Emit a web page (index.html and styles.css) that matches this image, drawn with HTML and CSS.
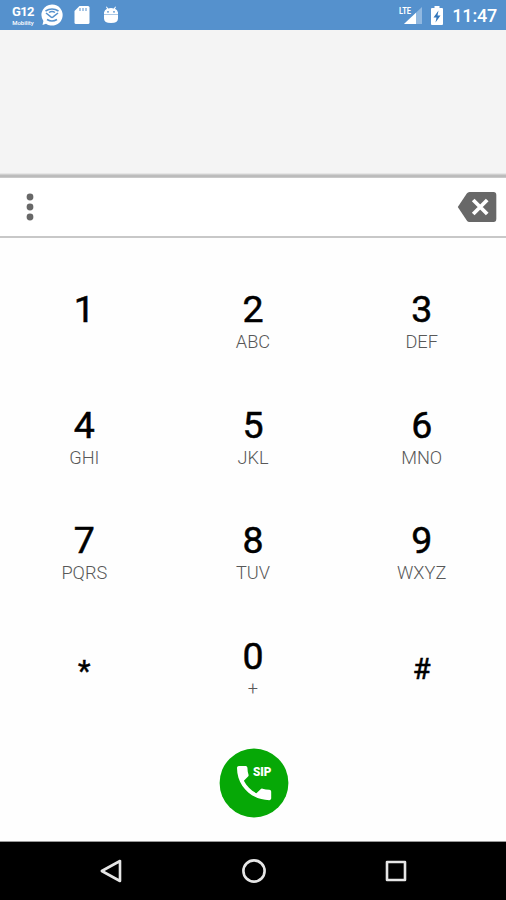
FILE: index.html
```html
<!DOCTYPE html>
<html lang="en">
<head>
<meta charset="utf-8">
<title>Dialer</title>
<link rel="stylesheet" href="styles.css">
</head>
<body>
<div class="phone">
  <header class="status">
    <div class="brand"><b>G12</b><span>Mobility</span></div>
    <svg class="mail" width="22" height="22" viewBox="0 0 22 22">
      <path d="M11 .4a10.600 10.600 0 1 1-6 19.300L1.500 21l.9-4A10.600 10.600 0 0 1 11 .4z" fill="#fff"/>
      <path d="M4.500 7Q11 2.800 17.500 7M5 9l5.200 4.200q.8.6 1.600 0L17 9M8 8.500q3-2 6 0" fill="none" stroke="#5591cd" stroke-width="1.500"/>
      <path d="M6 15.500q5 3 10 0" fill="none" stroke="#5591cd" stroke-width="1.600"/>
    </svg>
    <svg class="sd" width="16" height="20" viewBox="0 0 16 20">
      <path d="M5.500 1H14q1.500 0 1.500 1.500v15Q15.500 19 14 19H2Q.5 19 .5 17.500V6z" fill="#fff"/>
      <path d="M6 3v3M9 3v3M12 3v3" stroke="#8fb6de" stroke-width="1.500"/>
    </svg>
    <svg class="droid" width="16" height="18" viewBox="0 0 16 18">
      <path d="M1 8V6.500Q1.500 3.800 4 2.800L3 1l.8-.5 1.300 1.900q2.900-.8 5.800 0L12.200.5 13 1l-1 1.800q2.500 1 3 3.700V8zM1 8.600h14v3.900Q15 17 8 17T1 12.500z" fill="#fff"/>
      <circle cx="5" cy="5.800" r=".9" fill="#5591cd"/><circle cx="11" cy="5.800" r=".9" fill="#5591cd"/>
    </svg>
    <span class="spacer"></span>
    <svg class="signal" width="23" height="20" viewBox="0 0 23 20">
      <path d="M23 2v17H5z" fill="#91b8e0"/>
      <path d="M17 7.700V19H5z" fill="#fff"/>
      <text x="0" y="9" class="lte" textLength="12" lengthAdjust="spacingAndGlyphs">LTE</text>
    </svg>
    <svg class="battery" width="12" height="19" viewBox="0 0 12 19">
      <path d="M3.500 0h5v2H11q1 0 1 1v15q0 1-1 1H1q-1 0-1-1V3q0-1 1-1h2.500z" fill="#fff"/>
      <path d="M7.500 4.500 2.500 11.500H5.500L4.500 16.500 9.500 9.500H6.500z" fill="#3477bb"/>
    </svg>
    <time class="clock">11:47</time>
  </header>

  <section class="display"></section>

  <section class="entry">
    <svg width="8" height="28" viewBox="0 0 8 28" fill="#686868">
      <circle cx="4" cy="4" r="3.400"/><circle cx="4" cy="14" r="3.400"/><circle cx="4" cy="24" r="3.400"/>
    </svg>
    <svg width="40" height="30" viewBox="0 0 40 30">
      <path d="M12.500 0H36.500Q39.300 0 39.300 3V27Q39.300 30 36.500 30H12.500Q10.800 30 9.800 28.500L.8 15 9.800 1.500Q10.800 0 12.500 0z" fill="#686868"/>
      <path d="M16.200 8l14 14M30.200 8L16.200 22" stroke="#fff" stroke-width="3.800"/>
    </svg>
  </section>

  <main class="pad">
    <div class="key"><b>1</b><span></span></div>
    <div class="key"><b>2</b><span>ABC</span></div>
    <div class="key"><b>3</b><span>DEF</span></div>
    <div class="key"><b>4</b><span>GHI</span></div>
    <div class="key"><b>5</b><span>JKL</span></div>
    <div class="key"><b>6</b><span>MNO</span></div>
    <div class="key"><b>7</b><span>PQRS</span></div>
    <div class="key"><b>8</b><span>TUV</span></div>
    <div class="key"><b>9</b><span>WXYZ</span></div>
    <div class="key symbol star"><b>*</b></div>
    <div class="key"><b>0</b><span>+</span></div>
    <div class="key symbol"><b>#</b></div>
  </main>

  <div class="actions">
    <svg width="70" height="70" viewBox="0 0 70 70">
      <circle cx="35" cy="35" r="34.400" fill="#06a806"/>
      <path transform="translate(12.300 12.300) scale(1.900)" d="M6.620 10.790c1.440 2.830 3.760 5.140 6.590 6.590l2.200-2.200c.27-.27.670-.36 1.020-.24 1.120.37 2.330.57 3.570.57.550 0 1 .45 1 1V20c0 .55-.45 1-1 1-9.390 0-17-7.610-17-17 0-.55.450-1 1-1h3.500c.55 0 1 .45 1 1 0 1.250.2 2.450.57 3.570.11.350.03.740-.25 1.020z" fill="#fff"/>
      <text x="34" y="28" class="sip" textLength="18.500" lengthAdjust="spacingAndGlyphs">SIP</text>
    </svg>
  </div>

  <nav class="nav">
    <svg width="24" height="26" viewBox="0 0 24 26"><path d="M21 3v20L2.800 13z"/></svg>
    <svg width="26" height="26" viewBox="0 0 26 26"><circle cx="13" cy="13" r="10.600"/></svg>
    <svg width="24" height="24" viewBox="0 0 24 24"><path d="M3 3h18v18H3z"/></svg>
  </nav>
</div>
</body>
</html>
```
FILE: styles.css
```css
* { box-sizing: border-box; }
body { margin: 0; background: #fff; font-family: Roboto, "Liberation Sans", sans-serif; }
svg { display: block; flex: none; }
.phone { width: 506px; height: 900px; display: flex; flex-direction: column; background: #fefefe; }

.status { height: 30px; flex: none; display: flex; align-items: center; padding: 0 9px 0 12px; background: #5591cd; color: #fff; }
.brand { width: 22px; display: flex; flex-direction: column; align-items: center; margin-right: 7px; }
.brand b { font-size: 13px; line-height: 14px; letter-spacing: -0.6px; font-weight: 700; }
.brand span { font-size: 6px; line-height: 7px; font-weight: 500; }
.mail { margin-right: 11px; }
.sd { margin-right: 13px; }
.spacer { flex: 1; }
.signal { margin-right: 9px; }
.lte { font: 700 8.5px Roboto, sans-serif; fill: #fff; }
.battery { margin-right: 9px; }
.clock { font-size: 18px; font-weight: 500; line-height: 30px; padding-top: 2px; letter-spacing: -0.2px; }

.display { height: 148px; flex: none; background: linear-gradient(#f4f4f4 143px, #d8d8d8 144px, #b4b4b4 146px, #d0d0d0 148px); }
.entry { height: 60px; flex: none; display: flex; align-items: center; justify-content: space-between; padding: 0 9px 0 26px; border-bottom: 2px solid #c8c8c8; background: #fff; }

.pad { height: 487px; flex: none; padding-top: 24px; display: grid; grid-template-columns: repeat(3, 1fr); grid-template-rows: repeat(4, 115.7px); }
.key { display: flex; flex-direction: column; align-items: center; justify-content: center; }
.key b { font-size: 37.5px; line-height: 44px; font-weight: 400; color: #000; -webkit-text-stroke: 0.5px #000; }
.key span { height: 22px; font-size: 18.2px; line-height: 22px; font-weight: 300; color: #585858; }
.key.symbol { padding-top: 5px; }
.key.star { padding-top: 9px; }
.key.symbol b { font-size: 29px; line-height: 34px; }

.actions { height: 116px; flex: none; display: flex; align-items: center; justify-content: center; padding-left: 2px; }
.sip { font: 900 13px Roboto, sans-serif; fill: #fff; }

.nav { height: 59px; flex: none; display: flex; align-items: center; justify-content: space-between; padding: 0 98px 0 99px; background: #000; border-top: 1px solid #999; }
.nav svg { fill: none; stroke: #e6e6e6; stroke-width: 2.6; stroke-linejoin: round; }
```
